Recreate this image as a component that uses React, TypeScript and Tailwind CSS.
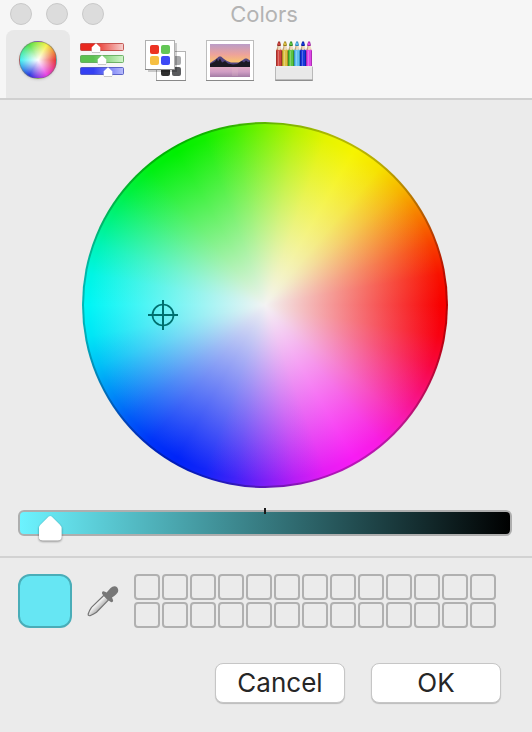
import { useState } from "react";
import type { ReactNode } from "react";

function WheelIcon() {
  return (
    <span className="mb-0.5 block size-[38px] rounded-full border border-[#777777]/60 bg-[radial-gradient(closest-side,#ffffff_0%,#ffffff00_100%),conic-gradient(from_90deg,#e83030,#e838e0_60deg,#2030e0_120deg,#40f0f0_180deg,#50e040_240deg,#f5f040_300deg,#e83030)] shadow-sm" />
  );
}

function SlidersIcon() {
  const rows = [
    { y: 0, x: 16, from: "#e8281e", to: "#f6d0ce", line: "#b93a34" },
    { y: 12, x: 22, from: "#5cc251", to: "#d2f5cc", line: "#55a34d" },
    { y: 24, x: 28, from: "#3440f2", to: "#b9bdfb", line: "#4048bd" },
  ];
  return (
    <svg width="44" height="36" viewBox="0 0 44 36">
      <defs>
        {rows.map((r) => (
          <linearGradient key={r.y} id={`bar${r.y}`}>
            <stop offset="0.3" stopColor={r.from} />
            <stop offset="1" stopColor={r.to} />
          </linearGradient>
        ))}
      </defs>
      {rows.map((r) => (
        <g key={r.y}>
          <rect x="0.5" y={r.y + 0.5} width="43" height="7" rx="1" fill={`url(#bar${r.y})`} stroke={r.line} strokeOpacity="0.8" />
          <path d={`M${r.x} ${r.y + 1.5}l4.3 4v3q0 1.5-1.5 1.5h-5.6q-1.5 0-1.5-1.5v-3z`} fill="#777777" opacity="0.5" />
          <path d={`M${r.x} ${r.y + 0.3}l4.3 4v3.4q0 1.5-1.5 1.5h-5.6q-1.5 0-1.5-1.5v-3.4z`} fill="#ffffff" />
        </g>
      ))}
    </svg>
  );
}

function PalettesIcon() {
  return (
    <svg width="42" height="42" viewBox="0 0 42 42">
      <rect x="11.5" y="11.5" width="29" height="29" fill="#ffffff" stroke="#b4b4b4" />
      <path d="M11 40.5h30" stroke="#888888" />
      <rect x="27" y="16" width="9" height="9" rx="2" fill="#a8a9ab" />
      <rect x="16" y="27" width="9" height="9" rx="2" fill="#303030" />
      <rect x="27" y="27" width="9" height="9" rx="2" fill="#5a5b5e" />
      <path d="M3 30.5h27.5V3" fill="none" stroke="#000000" strokeOpacity="0.18" strokeWidth="3" />
      <rect x="0.5" y="0.5" width="29" height="29" fill="#ffffff" stroke="#b0b0b0" />
      <path d="M0 29.5h30" stroke="#888888" />
      <rect x="5" y="5" width="9" height="9" rx="2" fill="#ec3323" />
      <rect x="16" y="5" width="9" height="9" rx="2" fill="#63c656" />
      <rect x="5" y="16" width="9" height="9" rx="2" fill="#f6bf42" />
      <rect x="16" y="16" width="9" height="9" rx="2" fill="#3e4af5" />
    </svg>
  );
}

function PictureIcon() {
  return (
    <svg width="48" height="41" viewBox="0 0 48 41">
      <defs>
        <linearGradient id="sky" x1="0" y1="0" x2="0" y2="1">
          <stop offset="0" stopColor="#bb9dc8" />
          <stop offset="0.45" stopColor="#eda29b" />
          <stop offset="0.8" stopColor="#f9c46f" />
          <stop offset="1" stopColor="#fbe088" />
        </linearGradient>
        <linearGradient id="lake" x1="0" y1="0" x2="0" y2="1">
          <stop offset="0" stopColor="#e2acc4" />
          <stop offset="0.5" stopColor="#cf9dc4" />
          <stop offset="1" stopColor="#a37ca4" />
        </linearGradient>
      </defs>
      <rect x="0.5" y="0.5" width="47" height="40" fill="#ffffff" stroke="#bdbdbd" />
      <path d="M0 40.5h48" stroke="#888888" />
      <rect x="4" y="4" width="40" height="23" fill="url(#sky)" />
      <path d="M4 23l3-2 3-2 3-2.5h2l3 2.5 3 2 4 1.5h8l3-2 3-2h2l3 2v6H4z" fill="#51447f" />
      <path d="M4 24l3-1.5 2-1 2-3 1 3 2-3 2 4 3-1.5 3 2.5 5 1 4-.5 3-2 2-1 2 1.5 2-2 2 1.5 2-.5V27H4z" fill="#1b1922" />
      <rect x="4" y="27" width="40" height="10" fill="url(#lake)" />
      <path d="M26 28h6v8h-6z" fill="#ecc6cd" opacity="0.2" />
    </svg>
  );
}

function PencilsIcon() {
  const pencils = [
    ["#d0443e", "#8f2a26"],
    ["#dcc044", "#9a7d18"],
    ["#5bc541", "#2e8120"],
    ["#5fc0f3", "#2b83b8"],
    ["#1738dc", "#061f96"],
    ["#dd45e6", "#9a249f"],
  ];
  return (
    <svg width="38" height="40" viewBox="0 0 38 40">
      {pencils.map(([body, edge], i) => (
        <g key={body} transform={`translate(${1 + i * 6} 0)`}>
          <path d="M3 1L0.3 9v4h5.6V9z" fill="#eddabd" />
          <path d="M3 1L0.3 9v1h1.5z" fill="#c5a67f" />
          <path d="M2.2 0.5h1.8l1 4q-2 1-4 0z" fill={edge} />
          <path d="M2 1.5h1.6l0.6 2.5h-2.4z" fill={body} />
          <path d="M0 9.5q1.5-2 3 0 1.5-2 3 0V26H0z" fill={body} />
          <path d="M0 9.5h1V26H0zM5 9.5h1V26H5z" fill={edge} opacity="0.7" />
          <path d="M2.5 10v16" stroke="#ffffff" strokeOpacity="0.25" />
        </g>
      ))}
      <rect x="0.5" y="26" width="37" height="13.5" fill="#e9e9e9" stroke="#b9b9b9" />
      <rect x="1" y="25" width="36" height="2" fill="#ececec" />
      <path d="M0.5 39.2h37" stroke="#8f8f8f" strokeWidth="1.4" />
    </svg>
  );
}

function EyedropperIcon() {
  return (
    <svg width="32" height="32" viewBox="0 0 32 32">
      <defs>
        <linearGradient id="glass" x1="0.3" y1="0.3" x2="0.7" y2="0.7">
          <stop offset="0.2" stopColor="#ffffff" />
          <stop offset="0.55" stopColor="#d2d2d2" />
          <stop offset="0.9" stopColor="#a2a2a2" />
        </linearGradient>
      </defs>
      <path d="M17 10.2L4.5 22.3Q2.5 25 1.2 29Q1 31 3 30.7Q7 29 9.5 27.2L21.6 14.8z" fill="url(#glass)" stroke="#747474" strokeWidth="1.2" />
      <path d="M15 7.6Q15.6 5.5 18 6.8L19.6 7.6L23.6 3Q26 .5 29 1.5Q32 3.5 31 7Q30 9 25 12.6L26 15Q26.6 17 24.3 17.2Q22.5 17 15.8 9.8Q14.8 8.8 15 7.6z" fill="#777777" />
    </svg>
  );
}

const tabs: { name: string; icon: ReactNode }[] = [
  { name: "Color Wheel", icon: <WheelIcon /> },
  { name: "Color Sliders", icon: <SlidersIcon /> },
  { name: "Color Palettes", icon: <PalettesIcon /> },
  { name: "Image Palettes", icon: <PictureIcon /> },
  { name: "Pencils", icon: <PencilsIcon /> },
];

function ColorWheel() {
  return (
    <div
      role="img"
      aria-label="Color wheel"
      className="relative mx-auto size-[366px] rounded-full border-2 border-black/25 bg-[radial-gradient(closest-side,#f3f3f3_0%,#f3f3f300_96%),conic-gradient(from_90deg,#f80000,#f80212_10deg,#f80740_20deg,#f81cb4_40deg,#f81ce2_50deg,#f81cf4_60deg,#e61cf4_70deg,#b81df5_80deg,#4022f7_100deg,#1224f8_110deg,#0024f8_120deg,#0034f8_130deg,#005af8_140deg,#00c0f7_160deg,#00e6f6_170deg,#00f6f6_180deg,#00f5e4_190deg,#00f4b6_200deg,#00f140_220deg,#00f012_230deg,#00f000_240deg,#12f000_250deg,#40f100_260deg,#b6f300_280deg,#e4f400_290deg,#f6f400_300deg,#f6e200_310deg,#f6b400_320deg,#f74000_340deg,#f81200_350deg,#f80000)] bg-origin-border"
    >
      <svg className="absolute top-44 left-16" width="30" height="30" viewBox="0 0 30 30" fill="none" stroke="#00706f" strokeWidth="2">
        <circle cx="15" cy="15" r="10.5" strokeWidth="1.7" />
        <path d="M15 0v30M0 15h30" />
      </svg>
    </div>
  );
}

export default function App() {
  const [tab, setTab] = useState(0);
  const [level, setLevel] = useState(4);

  return (
    <main className="flex min-h-screen flex-col bg-[#ebebeb] font-[Inter,'Liberation_Sans',sans-serif]">
      <header className="border-b-2 border-[#d0d0d0] bg-[#f6f6f6]">
        <div className="grid h-[30px] grid-cols-[1fr_auto_1fr] items-start pr-3.5 pl-2.5">
          <div className="flex gap-3.5 pt-[3px]">
            {["Close", "Minimize", "Zoom"].map((label) => (
              <button key={label} aria-label={label} className="size-[22px] rounded-full border border-[#c9c9c9] bg-[#dcdcdc]" />
            ))}
          </div>
          <h1 className="text-[22px] leading-7 text-[#b3b3b3]">Colors</h1>
        </div>
        <nav className="flex px-1.5">
          {tabs.map((t, i) => (
            <button
              key={t.name}
              aria-label={t.name}
              aria-pressed={i === tab}
              onClick={() => setTab(i)}
              className="flex h-[68px] w-16 items-start justify-center rounded-t-lg pb-2 aria-pressed:bg-[#e8e8e8]"
            >
              <span className="flex h-[61px] items-center">{t.icon}</span>
            </button>
          ))}
        </nav>
      </header>

      <section className="pt-[22px] pr-5 pb-5 pl-[18px]">
        <ColorWheel />
        <div className="relative mt-[22px] h-[26px] rounded-md border-2 border-[#aeaeae] bg-linear-to-r/srgb from-[#6cf3ff] to-black">
          <span className="absolute -top-1 left-1/2 h-1.5 w-0.5 -translate-x-1/2 bg-[#1a1a1a]" />
          <input
            type="range"
            aria-label="Brightness"
            min="0"
            max="100"
            value={level}
            onChange={(e) => setLevel(Number(e.target.value))}
            className="absolute inset-x-0 top-[3px] h-[26px] w-full appearance-none bg-transparent drop-shadow-[0_1px_1px_rgba(0,0,0,0.45)] [&::-webkit-slider-thumb]:h-[25px] [&::-webkit-slider-thumb]:w-[23px] [&::-webkit-slider-thumb]:appearance-none [&::-webkit-slider-thumb]:bg-white [&::-webkit-slider-thumb]:[clip-path:path('M10_1Q11.5_0_13_1L21_9Q23_11_23_13V21Q23_25_19_25H4Q0_25_0_21V13Q0_11_2_9Z')]"
          />
        </div>
      </section>

      <section className="flex items-center border-t-2 border-[#d2d2d2] px-[18px] pt-4">
        <button aria-label="Current color" className="size-[54px] rounded-xl border-2 border-[#49adb8] bg-[#66e6f3]" />
        <button aria-label="Pick a color from the screen" className="ml-[15px]">
          <EyedropperIcon />
        </button>
        <div className="ml-[15px] grid grid-cols-13 gap-0.5">
          {Array.from({ length: 26 }, (_, i) => (
            <button key={i} aria-label={`Saved color ${i + 1}`} className="size-[26px] rounded border-2 border-[#b0b0b0]" />
          ))}
        </div>
      </section>

      <footer className="flex justify-end gap-[26px] px-[31px] pt-[35px]">
        {["Cancel", "OK"].map((label) => (
          <button
            key={label}
            className="h-10 w-[130px] rounded-lg border border-[#c6c6c6] bg-white text-[26px] leading-9 text-[#262626] shadow-[0_1px_1px_rgba(0,0,0,0.2)]"
          >
            {label}
          </button>
        ))}
      </footer>
    </main>
  );
}
